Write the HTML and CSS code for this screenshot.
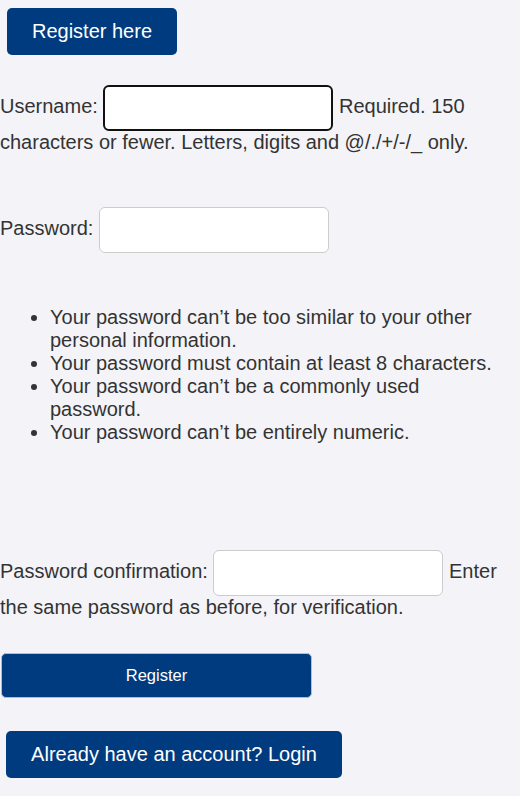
FILE: index.html
```html
<!DOCTYPE html>
<html lang="en">
<head>
<meta charset="utf-8">
<title>Register</title>
<link rel="stylesheet" href="styles.css">
</head>
<body>
<div class="top"><a class="btn-link" href="#">Register here</a></div>
<form class="reg-form">
  <p class="field"><label for="u">Username:</label> <input id="u" class="inp inp-focus" type="text"> <span class="help">Required. 150 characters or fewer. Letters, digits and @/./+/-/_ only.</span></p>
  <p class="field"><label for="p1">Password:</label> <input id="p1" class="inp" type="password"></p>
  <ul class="rules">
    <li>Your password can’t be too similar to your other personal information.</li>
    <li>Your password must contain at least 8 characters.</li>
    <li>Your password can’t be a commonly used<br>password.</li>
    <li>Your password can’t be entirely numeric.</li>
  </ul>
  <p class="field field-last"><label for="p2">Password confirmation:</label> <input id="p2" class="inp" type="password"> <span class="help">Enter the same password as before, for verification.</span></p>
  <button class="btn-submit" type="button">Register</button>
</form>
<div class="bottom"><a class="btn-link btn-login" href="#">Already have an account? Login</a></div>
</body>
</html>
```
FILE: styles.css
```css
html, body {
  margin: 0;
  padding: 0;
}
body {
  background: #f3f3f8;
  color: #333;
  font-family: "Liberation Sans", Arial, sans-serif;
  font-size: 20px;
  line-height: 23px;
}
.top {
  padding: 8px 0 0 7px;
}
.btn-link {
  display: inline-block;
  box-sizing: border-box;
  height: 47px;
  line-height: 47px;
  padding: 0 26px;
  background: #003b7f;
  color: #fff;
  font-size: 20px;
  text-decoration: none;
  border-radius: 5px;
}
.top .btn-link {
  width: 170px;
  padding: 0;
  text-align: center;
}
.reg-form {
  margin-top: 30px;
}
.field {
  margin: 0 0 53px;
}
.field-last {
  margin-bottom: 34px;
}
.inp {
  box-sizing: border-box;
  width: 230px;
  height: 46px;
  margin: 0;
  vertical-align: middle;
  background: #fff;
  border: 1px solid #ccc;
  border-radius: 6px;
  font: inherit;
}
.inp-focus {
  border: 2px solid #111;
}
.rules {
  margin: 0 0 106px;
  padding-left: 50px;
}
.btn-submit {
  display: block;
  box-sizing: border-box;
  margin-left: 1px;
  width: 311px;
  height: 45px;
  background: #003b7f;
  color: #fff;
  border: 1px solid #b8bcc6;
  border-radius: 5px;
  font-family: "Liberation Sans", Arial, sans-serif;
  font-size: 16.5px;
}
.bottom {
  margin: 33px 0 0 6px;
}
.btn-login {
  width: 336px;
  padding: 0;
  text-align: center;
}
```
